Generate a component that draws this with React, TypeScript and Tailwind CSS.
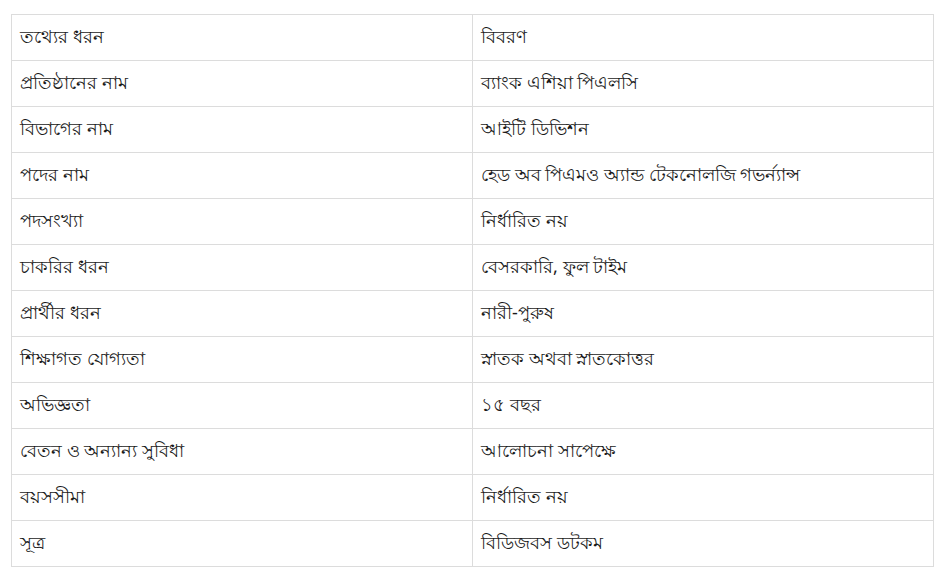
import React from "react";

const rows: [string, string][] = [
  ["তথ্যের ধরন", "বিবরণ"],
  ["প্রতিষ্ঠানের নাম", "ব্যাংক এশিয়া পিএলসি"],
  ["বিভাগের নাম", "আইটি ডিভিশন"],
  ["পদের নাম", "হেড অব পিএমও অ্যান্ড টেকনোলজি গভর্ন্যান্স"],
  ["পদসংখ্যা", "নির্ধারিত নয়"],
  ["চাকরির ধরন", "বেসরকারি, ফুল টাইম"],
  ["প্রার্থীর ধরন", "নারী-পুরুষ"],
  ["শিক্ষাগত যোগ্যতা", "স্নাতক অথবা স্নাতকোত্তর"],
  ["অভিজ্ঞতা", "১৫ বছর"],
  ["বেতন ও অন্যান্য সুবিধা", "আলোচনা সাপেক্ষে"],
  ["বয়সসীমা", "নির্ধারিত নয়"],
  ["সূত্র", "বিডিজবস ডটকম"],
];

export default function App() {
  return (
    <div className="min-h-screen bg-white pt-[14px] pl-[11px] pr-[13px] font-['Noto_Sans',_'Liberation_Sans',_sans-serif] text-[#1a1a1a]">
      <table className="w-[923px] border-collapse border border-[#dcdcdc] table-fixed">
        <tbody>
          {rows.map(([k, v], i) => (
            <tr key={i} className="h-[46px]">
              <td className="w-[461px] border border-[#dcdcdc] pl-[8px] pr-[8px] pt-0 pb-[4px] text-[18px] leading-[24px] align-middle">
                {k}
              </td>
              <td className="border border-[#dcdcdc] pl-[8px] pr-[8px] pt-0 pb-[4px] text-[18px] leading-[24px] align-middle">
                {v}
              </td>
            </tr>
          ))}
        </tbody>
      </table>
    </div>
  );
}
